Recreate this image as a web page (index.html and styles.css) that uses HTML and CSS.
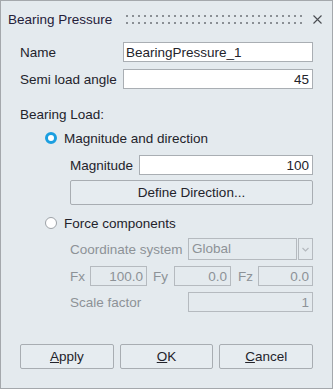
FILE: index.html
```html
<!DOCTYPE html>
<html lang="en">
<head>
    <meta charset="UTF-8">
    <title>Bearing Pressure</title>
    <link rel="stylesheet" href="styles.css">
</head>
<body>
<div class="window">
    <div class="titlebar">
        <span class="title">Bearing Pressure</span>
        <svg class="grip" width="176" height="9" viewBox="0 0 176 9">
            <defs>
                <pattern id="dots" width="6" height="7" patternUnits="userSpaceOnUse">
                    <rect width="2" height="2" fill="#8a8f94"></rect>
                </pattern>
            </defs>
            <rect width="176" height="9" fill="url(#dots)"></rect>
        </svg>
        <svg class="close" width="9" height="9" viewBox="0 0 9 9">
            <path d="M0.5 0.5 L8.5 8.5 M8.5 0.5 L0.5 8.5" stroke="#4a4d52" stroke-width="1.1" fill="none"></path>
        </svg>
    </div>

    <div class="content">
        <div class="row">
            <label class="lbl w-top">Name</label>
            <input class="field" type="text" value="BearingPressure_1">
        </div>
        <div class="row gap-top">
            <label class="lbl w-top">Semi load angle</label>
            <input class="field num" type="text" value="45">
        </div>

        <div class="section">Bearing Load:</div>

        <div class="radio-row first">
            <span class="radio checked"></span>
            <span>Magnitude and direction</span>
        </div>
        <div class="sub">
            <div class="row mag">
                <label class="lbl w-mag">Magnitude</label>
                <input class="field num" type="text" value="100">
            </div>
            <button class="btn define">Define Direction...</button>
        </div>

        <div class="radio-row second">
            <span class="radio"></span>
            <span>Force components</span>
        </div>
        <div class="sub disabled">
            <div class="row coord">
                <label class="lbl w-sub">Coordinate system</label>
                <div class="combo">
                    <span class="combo-text">Global</span>
                    <span class="combo-arrow">
                        <svg width="7" height="5" viewBox="0 0 7 5">
                            <path d="M0.5 1 L3.5 4 L6.5 1" stroke="#b4b9be" stroke-width="1.2" fill="none"></path>
                        </svg>
                    </span>
                </div>
            </div>
            <div class="row xyz">
                <label class="lbl w-fx">Fx</label>
                <input class="field num small" type="text" value="100.0" disabled>
                <label class="lbl w-fy">Fy</label>
                <input class="field num small" type="text" value="0.0" disabled>
                <label class="lbl w-fz">Fz</label>
                <input class="field num" type="text" value="0.0" disabled>
            </div>
            <div class="row scale">
                <label class="lbl w-sub">Scale factor</label>
                <input class="field num" type="text" value="1" disabled>
            </div>
        </div>

        <div class="buttons">
            <button class="btn"><u>A</u>pply</button>
            <button class="btn"><u>O</u>K</button>
            <button class="btn"><u>C</u>ancel</button>
        </div>
    </div>
</div>
</body>
</html>
```

FILE: styles.css
```css
body {
    margin: 0;
    font-family: "Liberation Sans", Arial, sans-serif;
    font-size: 13.5px;
    color: #23232b;
}

.window {
    width: 333px;
    height: 389px;
    box-sizing: border-box;
    border: 1px solid #a4a8ac;
    background: #e4eaee;
    display: flex;
    flex-direction: column;
}

.titlebar {
    height: 35px;
    display: flex;
    align-items: center;
    padding-left: 7px;
    flex-shrink: 0;
}

.title {
    color: #24203a;
    width: 118px;
    margin-top: 1px;
}

.grip {
    margin-top: 1px;
}

.close {
    margin-left: 11px;
    margin-top: 1px;
}

.content {
    padding: 6px 19px 0 19px;
    display: flex;
    flex-direction: column;
}

.row {
    display: flex;
    align-items: center;
    height: 20px;
}

.gap-top {
    margin-top: 7px;
}

.lbl {
    flex-shrink: 0;
}

.w-top {
    width: 103px;
}

.w-mag {
    width: 69px;
}

.w-sub {
    width: 118px;
}

.w-fx {
    width: 20px;
}

.w-fy {
    width: 21px;
    margin-left: 6px;
}

.w-fz {
    width: 20px;
    margin-left: 7px;
}

.field {
    flex: 1;
    min-width: 0;
    height: 20px;
    box-sizing: border-box;
    border: 1px solid #a9aeb3;
    background: #fff;
    font-family: inherit;
    font-size: 13.5px;
    color: #23232b;
    padding: 0 2px;
    margin: 0;
    outline: none;
}

.field.num {
    text-align: right;
    padding-right: 3px;
}

.field.small {
    flex: 0 0 57px;
}

.section {
    margin-top: 18px;
    height: 16px;
    line-height: 16px;
}

.radio-row {
    display: flex;
    align-items: center;
    height: 16px;
    padding-left: 25px;
}

.radio-row.first {
    margin-top: 7px;
}

.radio-row.second {
    margin-top: 10px;
}

.radio {
    width: 12px;
    height: 12px;
    box-sizing: border-box;
    border-radius: 50%;
    border: 1px solid #9da2a7;
    background: #fff;
    margin-right: 7px;
    flex-shrink: 0;
}

.radio.checked {
    border: 3.5px solid #1b9fe0;
    background: #fff;
}

.sub {
    padding-left: 50px;
    display: flex;
    flex-direction: column;
}

.mag {
    margin-top: 9px;
}

.btn {
    height: 25px;
    box-sizing: border-box;
    border: 1px solid #a8adb2;
    border-radius: 2px;
    background: #e6ecf0;
    font-family: inherit;
    font-size: 13.5px;
    color: #23232b;
    padding: 0;
    margin: 0;
}

.define {
    margin-top: 5px;
}

.disabled {
    color: #8d9297;
}

.disabled .field {
    background: #e4eaee;
    border-color: #b5babf;
    color: #8d9297;
}

.coord {
    margin-top: 7px;
    height: 22px;
}

.combo {
    flex: 1;
    display: flex;
    height: 22px;
}

.combo-text {
    flex: 1;
    border: 1px solid #b5babf;
    box-sizing: border-box;
    padding-left: 3px;
    line-height: 20px;
}

.combo-arrow {
    width: 15px;
    margin-left: 1px;
    border: 1px solid #b5babf;
    box-sizing: border-box;
    display: flex;
    align-items: center;
    justify-content: center;
}

.xyz {
    margin-top: 6px;
}

.scale {
    margin-top: 6px;
}

.buttons {
    margin-top: 32px;
    display: flex;
    gap: 6px;
}

.buttons .btn {
    flex: 1;
}
```
